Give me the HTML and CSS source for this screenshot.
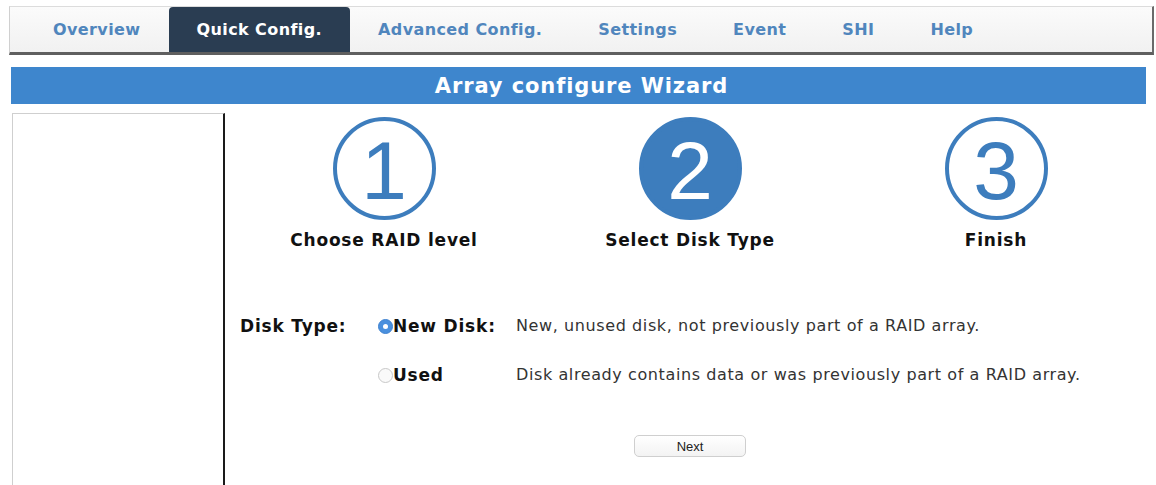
FILE: index.html
```html
<!DOCTYPE html>
<html>
<head>
<meta charset="utf-8">
<link rel="stylesheet" href="styles.css">
</head>
<body>
<div class="nav">
  <div class="tab">Overview</div>
  <div class="tab active">Quick Config.</div>
  <div class="tab">Advanced Config.</div>
  <div class="tab">Settings</div>
  <div class="tab">Event</div>
  <div class="tab">SHI</div>
  <div class="tab">Help</div>
</div>
<div class="titlebar">Array configure Wizard</div>
<div class="main">
  <div class="sidebar"></div>
  <div class="content">
    <div class="steps">
      <div class="step">
        <div class="circle">1</div>
        <div class="step-label">Choose RAID level</div>
      </div>
      <div class="step">
        <div class="circle filled">2</div>
        <div class="step-label">Select Disk Type</div>
      </div>
      <div class="step">
        <div class="circle">3</div>
        <div class="step-label">Finish</div>
      </div>
    </div>
    <div class="form">
      <div class="f-label">Disk Type:</div>
      <div class="f-opt"><span class="radio on"></span>New Disk:</div>
      <div class="f-desc">New, unused disk, not previously part of a RAID array.</div>
      <div></div>
      <div class="f-opt"><span class="radio"></span>Used</div>
      <div class="f-desc">Disk already contains data or was previously part of a RAID array.</div>
    </div>
    <div class="actions">
      <div class="btn">Next</div>
    </div>
  </div>
</div>
</body>
</html>
```
FILE: styles.css
```css
html, body { margin: 0; background: #fff; }
body {
  padding: 6px 2px 0 9px;
  font-family: "DejaVu Sans", Verdana, sans-serif;
  overflow: hidden;
  height: 485px;
  box-sizing: border-box;
}
.nav {
  display: flex;
  align-items: flex-end;
  height: 49px;
  box-sizing: border-box;
  padding-left: 15px;
  background: linear-gradient(#fbfbfb, #f1f1f1);
  border-top: 1px solid #dcdcdc;
  border-left: 1px solid #d0d0d0;
  border-right: 2px solid #6a6a6a;
  border-bottom: 3px solid #5f5f5f;
}
.tab {
  height: 45px;
  display: flex;
  align-items: center;
  padding: 0 28px;
  font-weight: bold;
  font-size: 16px;
  color: #5086bd;
  letter-spacing: 0.4px;
}
.tab.active {
  background: #2a3d52;
  color: #fff;
  border-radius: 4px 4px 0 0;
}
.titlebar {
  margin: 12px 0 0 2px;
  width: 1135px;
  height: 37px;
  box-sizing: border-box;
  padding-left: 6px;
  background: #3e86cd;
  color: #fff;
  font-weight: bold;
  font-size: 21px;
  letter-spacing: 0.9px;
  display: flex;
  align-items: center;
  justify-content: center;
}
.main {
  display: flex;
  margin: 9px 0 0 3px;
}
.sidebar {
  width: 210px;
  height: 380px;
  border-top: 1px solid #cfcfcf;
  border-left: 1px solid #cfcfcf;
  border-right: 2px solid #1a1a1a;
}
.content {
  padding: 4px 0 0 6px;
  width: 918px;
}
.steps {
  display: grid;
  grid-template-columns: repeat(3, 306px);
}
.step {
  display: flex;
  flex-direction: column;
  align-items: center;
}
.circle {
  width: 103px;
  height: 103px;
  box-sizing: border-box;
  border: 4px solid #3d7dbd;
  border-radius: 50%;
  color: #3d7dbd;
  font-family: "Liberation Sans", Arial, sans-serif;
  font-size: 82px;
  line-height: 82px;
  padding-top: 4px;
  font-weight: normal;
  display: flex;
  align-items: center;
  justify-content: center;
}
.circle.filled {
  background: #3d7dbd;
  color: #fff;
}
.step-label {
  margin-top: 10px;
  font-weight: bold;
  font-size: 17px;
  letter-spacing: 0.8px;
  color: #111;
}
.form {
  margin-top: 65px;
  display: grid;
  grid-template-columns: 138px 138px auto;
  row-gap: 27px;
  padding-left: 9px;
  align-items: center;
}
.f-label, .f-opt {
  font-weight: bold;
  font-size: 17px;
  letter-spacing: 0.8px;
  color: #111;
  line-height: 22px;
}
.f-opt { display: flex; align-items: center; }
.f-desc {
  font-size: 16px;
  letter-spacing: 0.6px;
  color: #333;
  line-height: 22px;
}
.radio {
  width: 15px;
  height: 15px;
  box-sizing: border-box;
  border-radius: 50%;
  border: 1px solid #c8c8c8;
  background: #fafafa;
  margin-right: 0;
  position: relative;
}
.radio.on {
  background: #4a90de;
  border-color: #3f82d0;
}
.radio.on::after {
  content: "";
  position: absolute;
  left: 4px; top: 4px;
  width: 5px; height: 5px;
  border-radius: 50%;
  background: #fff;
}
.actions {
  display: grid;
  grid-template-columns: repeat(3, 306px);
  margin-top: 49px;
}
.btn {
  grid-column: 2;
  justify-self: center;
  width: 112px;
  height: 22px;
  box-sizing: border-box;
  border: 1px solid #cfcfcf;
  border-radius: 5px;
  background: linear-gradient(#ffffff, #f3f3f3);
  font-family: "Liberation Sans", Arial, sans-serif;
  font-size: 13px;
  display: flex;
  align-items: center;
  justify-content: center;
  color: #222;
}
```
